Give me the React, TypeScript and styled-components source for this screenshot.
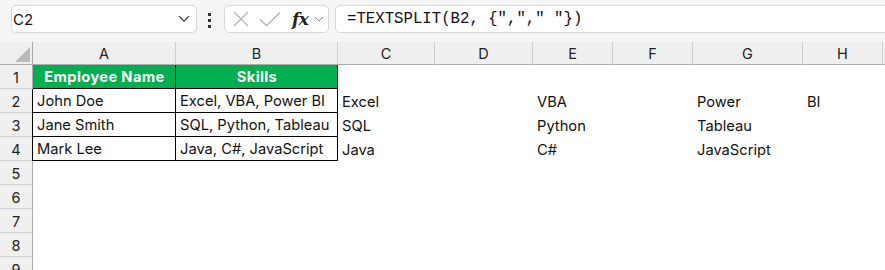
import React from "react";
import styled, { createGlobalStyle, css } from "styled-components";

const Global = createGlobalStyle`
  body { margin: 0; font-family: "Inter", "Liberation Sans", sans-serif; }
`;

const Page = styled.div`
  width: 885px;
  height: 270px;
  overflow: hidden;
  background: #f5f5f5;
`;

const Toolbar = styled.div`
  height: 42px;
  box-sizing: border-box;
  display: flex;
  align-items: flex-start;
  padding: 5px 0 0 11px;
`;

const Box = styled.div`
  height: 28px;
  box-sizing: border-box;
  border: 1px solid #d8d8d8;
  border-radius: 5px;
  background: #fff;
  display: flex;
  align-items: center;
`;

const NameBox = styled(Box)`
  width: 186px;
  justify-content: space-between;
  padding: 0 6px 0 1px;
  font-size: 15px;
  color: #111;
`;

const Dots = styled.div`
  margin: 8px 0 0 11px;
  width: 4px;
  display: flex;
  flex-direction: column;
  gap: 3px;
  span {
    display: block;
    width: 3px;
    height: 3px;
    background: #333;
  }
`;

const FuncBox = styled(Box)`
  width: 105px;
  margin-left: 12px;
  padding-left: 8px;
`;

const CheckIcon = styled.svg`
  margin-left: 10px;
`;

const Fx = styled.span`
  font-family: "DejaVu Serif", "Liberation Serif", serif;
  font-style: italic;
  font-weight: 700;
  font-size: 17px;
  color: #222;
  margin-left: 11px;
  letter-spacing: -0.5px;
`;

const FxChevron = styled.span`
  display: flex;
  margin-left: 6px;
`;

const FormulaBox = styled(Box)`
  flex: 1;
  margin: 0 -10px 0 6px;
  padding-left: 11px;
  font-family: "Liberation Mono", monospace;
  font-size: 15.7px;
  color: #111;
  white-space: pre;
`;

const Sheet = styled.div`
  display: grid;
  grid-template-columns: 33px 143px 162px 97px 98px 80px 80px 110px 80px 1fr;
  grid-template-rows: 23px;
  grid-auto-rows: 24px;
  background: #fff;
  font-size: 14.7px;
  color: #111;
`;

const Corner = styled.div`
  background: #efefef;
  border-right: 1px solid #ababab;
  border-bottom: 1px solid #ababab;
  box-sizing: border-box;
  display: flex;
  align-items: flex-end;
  justify-content: flex-end;
  padding: 0 2px 2px 0;
  &::after {
    content: "";
    width: 15px;
    height: 15px;
    background: #b9b9b9;
    clip-path: polygon(100% 0, 100% 100%, 0 100%);
  }
`;

const ColHead = styled.div`
  background: #efefef;
  border-bottom: 1px solid #ababab;
  border-right: 1px solid #d0d0d0;
  box-sizing: border-box;
  display: flex;
  align-items: center;
  justify-content: center;
  font-size: 14.5px;
  color: #222;
  padding-top: 1px;
`;

const RowHead = styled.div`
  background: #efefef;
  border-right: 1px solid #ababab;
  border-bottom: 1px solid #d0d0d0;
  box-sizing: border-box;
  display: flex;
  align-items: center;
  justify-content: center;
  font-size: 14.5px;
  color: #222;
  padding-top: 1px;
`;

const Cell = styled.div<{ $title?: boolean; $framed?: boolean; $first?: boolean }>`
  box-sizing: border-box;
  display: flex;
  align-items: center;
  padding: 1px 3px 0 4px;
  white-space: nowrap;
  ${(p) =>
    p.$framed &&
    css`
      border-right: 1px solid #000;
      border-bottom: 1px solid #000;
    `}
  ${(p) =>
    p.$first &&
    css`
      box-shadow: -1px 0 0 #000;
    `}
  ${(p) =>
    p.$title &&
    css`
      background: #00b050;
      color: #fff;
      font-weight: 700;
      justify-content: center;
      letter-spacing: 0.35px;
    `}
`;

const Chevron = ({ w = 12, color = "#333" }: { w?: number; color?: string }) => (
  <svg width={w} height={w * 0.6} viewBox="0 0 12 7" fill="none">
    <path d="M1 1 L6 6 L11 1" stroke={color} strokeWidth="1.2" />
  </svg>
);

const columns = ["A", "B", "C", "D", "E", "F", "G", "H", ""];

const data: string[][] = [
  ["Employee Name", "Skills"],
  ["John Doe", "Excel, VBA, Power BI", "Excel", "", "VBA", "", "Power", "BI"],
  ["Jane Smith", "SQL, Python, Tableau", "SQL", "", "Python", "", "Tableau", ""],
  ["Mark Lee", "Java, C#, JavaScript", "Java", "", "C#", "", "JavaScript", ""],
];

const ROWS = 9;
const FORMULA = '=TEXTSPLIT(B2, {","," "})';

export default function App() {
  return (
    <Page>
      <Global />
      <Toolbar>
        <NameBox>
          <span>C2</span>
          <Chevron w={12} />
        </NameBox>
        <Dots>
          <span />
          <span />
          <span />
        </Dots>
        <FuncBox>
          <svg width="16" height="16" viewBox="0 0 16 16">
            <path d="M1 1 L15 15 M15 1 L1 15" stroke="#b4b4b4" strokeWidth="1.3" />
          </svg>
          <CheckIcon width="22" height="16" viewBox="0 0 22 16">
            <path d="M1 8.5 L7.5 14.5 L21 1.5" stroke="#b4b4b4" strokeWidth="1.3" fill="none" />
          </CheckIcon>
          <Fx>fx</Fx>
          <FxChevron>
            <Chevron w={10} color="#888" />
          </FxChevron>
        </FuncBox>
        <FormulaBox>{FORMULA}</FormulaBox>
      </Toolbar>
      <Sheet>
        <Corner />
        {columns.map((c, i) => (
          <ColHead key={i}>{c}</ColHead>
        ))}
        {Array.from({ length: ROWS }, (_, r) => {
          const row = data[r] ?? [];
          return (
            <React.Fragment key={r}>
              <RowHead>{r + 1}</RowHead>
              {columns.map((_, c) => {
                const inTable = r < data.length && c < 2;
                return (
                  <Cell
                    key={c}
                    $title={r === 0 && c < 2}
                    $framed={inTable}
                    $first={inTable && c === 0 && r > 0}
                  >
                    {row[c] ?? ""}
                  </Cell>
                );
              })}
            </React.Fragment>
          );
        })}
      </Sheet>
    </Page>
  );
}
